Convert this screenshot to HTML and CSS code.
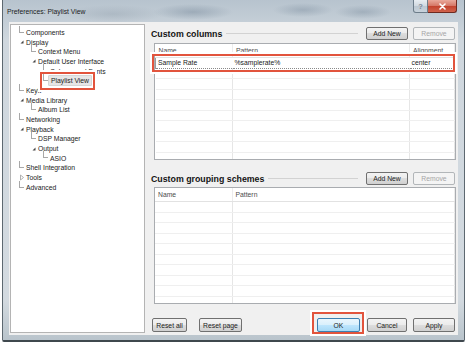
FILE: index.html
```html
<!DOCTYPE html>
<html lang="en">
<head>
  <meta charset="UTF-8">
  <title>Preferences: Playlist View</title>
  <link rel="stylesheet" href="styles.css">
</head>
<body>
  <div class="window">
    <div class="titlebar">
      <span class="title">Preferences: Playlist View</span>
      <div class="caption-btns">
        <span class="cap help">?</span>
        <span class="cap close">
          <svg width="9" height="7" viewBox="0 0 9 7"><path d="M2 1 L7 6 M7 1 L2 6" stroke="#fff" stroke-width="1.6" stroke-linecap="round"/></svg>
        </span>
      </div>
    </div>

    <div class="client">
      <!-- Page tree -->
      <div class="tree">
        <div class="node l0 leaf"><i class="g"></i>Components</div>
        <div class="node l0 open"><i class="g"><svg width="6" height="6" viewBox="0 0 6 6"><polygon points="4.5,1.5 4.5,4.5 1.5,4.5" fill="#444"/></svg></i>Display</div>
        <div class="node l1 leaf"><i class="g"></i>Context Menu</div>
        <div class="node l1 open"><i class="g"><svg width="6" height="6" viewBox="0 0 6 6"><polygon points="4.5,1.5 4.5,4.5 1.5,4.5" fill="#444"/></svg></i>Default User Interface</div>
        <div class="node l2 leaf"><i class="g"></i>Colours and Fonts</div>
        <div class="node l2 leaf"><i class="g"></i><span class="selected">Playlist View</span></div>
        <div class="node l0 leaf"><i class="g"></i>Keylt</div>
        <div class="node l0 open"><i class="g"><svg width="6" height="6" viewBox="0 0 6 6"><polygon points="4.5,1.5 4.5,4.5 1.5,4.5" fill="#444"/></svg></i>Media Library</div>
        <div class="node l1 leaf"><i class="g"></i>Album List</div>
        <div class="node l0 leaf"><i class="g"></i>Networking</div>
        <div class="node l0 open"><i class="g"><svg width="6" height="6" viewBox="0 0 6 6"><polygon points="4.5,1.5 4.5,4.5 1.5,4.5" fill="#444"/></svg></i>Playback</div>
        <div class="node l1 leaf"><i class="g"></i>DSP Manager</div>
        <div class="node l1 open"><i class="g"><svg width="6" height="6" viewBox="0 0 6 6"><polygon points="4.5,1.5 4.5,4.5 1.5,4.5" fill="#444"/></svg></i>Output</div>
        <div class="node l2 leaf"><i class="g"></i>ASIO</div>
        <div class="node l0 leaf"><i class="g"></i>Shell Integration</div>
        <div class="node l0 closed"><i class="g"><svg width="6" height="7" viewBox="0 0 6 7"><polygon points="1.5,1 4.5,3.5 1.5,6" fill="none" stroke="#a0a0a0" stroke-width="0.8"/></svg></i>Tools</div>
        <div class="node l0 leaf"><i class="g"></i>Advanced</div>
        <div class="callout tree-callout"></div>
      </div>

      <!-- Playlist View page -->
      <div class="page">
        <div class="group-head">
          <h2>Custom columns</h2>
          <span class="rule"></span>
          <button class="btn">Add New</button>
          <button class="btn last" disabled>Remove</button>
        </div>
        <div class="list list-columns">
          <div class="list-body">
            <table>
              <colgroup><col class="c-name"><col class="c-pattern"><col></colgroup>
              <thead>
                <tr><th>Name</th><th>Pattern</th><th>Alignment</th></tr>
              </thead>
              <tbody>
                <tr class="focus"><td>Sample Rate</td><td>%samplerate%</td><td>center</td></tr>
                <tr><td></td><td></td><td></td></tr>
                <tr><td></td><td></td><td></td></tr>
                <tr><td></td><td></td><td></td></tr>
                <tr><td></td><td></td><td></td></tr>
                <tr><td></td><td></td><td></td></tr>
                <tr><td></td><td></td><td></td></tr>
                <tr><td></td><td></td><td></td></tr>
                <tr><td></td><td></td><td></td></tr>
                <tr><td></td><td></td><td></td></tr>
              </tbody>
            </table>
          </div>
          <div class="callout row-callout"></div>
        </div>

        <div class="group-head second">
          <h2>Custom grouping schemes</h2>
          <span class="rule"></span>
          <button class="btn">Add New</button>
          <button class="btn last" disabled>Remove</button>
        </div>
        <div class="list list-groups">
          <div class="list-body">
            <table>
              <colgroup><col class="c-name"><col></colgroup>
              <thead>
                <tr><th>Name</th><th>Pattern</th></tr>
              </thead>
              <tbody>
                <tr><td></td><td></td></tr>
                <tr><td></td><td></td></tr>
                <tr><td></td><td></td></tr>
                <tr><td></td><td></td></tr>
                <tr><td></td><td></td></tr>
                <tr><td></td><td></td></tr>
                <tr><td></td><td></td></tr>
                <tr><td></td><td></td></tr>
                <tr><td></td><td></td></tr>
                <tr><td></td><td></td></tr>
              </tbody>
            </table>
          </div>
        </div>

        <div class="footer">
          <button class="btn reset-all">Reset all</button>
          <button class="btn reset-page">Reset page</button>
          <span class="spacer"></span>
          <span class="ok-wrap">
            <button class="btn default">OK</button>
            <span class="callout ok-callout"></span>
          </span>
          <button class="btn cancel">Cancel</button>
          <button class="btn apply">Apply</button>
        </div>
      </div>
    </div>
  </div>
</body>
</html>
```

FILE: styles.css
```css
body {
  margin: 0;
  background: #fff;
  font-family: "Liberation Sans", Arial, sans-serif;
  font-size: 6.8px;
  color: #222;
}

.window {
  margin-left: 2px;
  width: 463px;
  height: 342px;
  box-sizing: border-box;
  border: 1px solid #5d6870;
  border-top: none;
  border-bottom: 2px solid #3f484e;
  border-radius: 0 0 2px 2px;
  padding: 0 6px 5px;
  display: flex;
  flex-direction: column;
  background:
    radial-gradient(ellipse 40px 8px at 190px 12px, rgba(95, 115, 135, .35), transparent),
    radial-gradient(ellipse 30px 7px at 300px 10px, rgba(95, 115, 135, .3), transparent),
    radial-gradient(ellipse 28px 7px at 360px 12px, rgba(95, 115, 135, .3), transparent),
    radial-gradient(ellipse 50px 9px at 110px 14px, rgba(120, 135, 150, .25), transparent),
    linear-gradient(#b7c3ce, #cfd7de 40px, #d3dae0 300px, #b9c4cc);
}

.titlebar {
  height: 22px;
  display: flex;
  align-items: center;
}
.title {
  margin-left: -2px;
  color: #1c1c1c;
}
.caption-btns {
  margin-left: auto;
  margin-right: 1px;
  align-self: flex-start;
  display: flex;
}
.cap {
  height: 13px;
  box-sizing: border-box;
  display: flex;
  align-items: center;
  justify-content: center;
}
.help {
  width: 15px;
  border: 1px solid #6d7d8a;
  border-top: none;
  border-radius: 0 0 0 3px;
  background: linear-gradient(#e8edf2, #d0d8e0 50%, #bcc7d1 50%, #c9d3dc);
  color: #7a8794;
  font-weight: bold;
  font-size: 7.5px;
}
.close {
  width: 29px;
  border: 1px solid #6e2a20;
  border-top: none;
  border-left: none;
  border-radius: 0 0 3px 0;
  background: linear-gradient(#e9a99b, #d47564 50%, #c2412c 50%, #d0634c);
}

.client {
  flex: 1;
  background: #f0f0f0;
  display: flex;
  padding: 2px 2px 2px 1px;
}

/* tree */
.tree {
  width: 135px;
  box-sizing: border-box;
  border: 1px solid #b4b4b4;
  background: #fff;
  padding-top: 2.5px;
  position: relative;
}
.node {
  height: 9.7px;
  display: flex;
  align-items: center;
  white-space: nowrap;
}
.l0 { padding-left: 8px; }
.l1 { padding-left: 20px; }
.l2 { padding-left: 32px; }
.g {
  width: 6px;
  height: 100%;
  margin-right: 1px;
  flex: none;
  position: relative;
  display: flex;
  align-items: center;
}
.leaf .g::before {
  content: "";
  position: absolute;
  left: 0;
  top: -2px;
  width: 5px;
  height: 7px;
  box-sizing: border-box;
  border-left: 1px solid #a8a8a8;
  border-bottom: 1px solid #a8a8a8;
}
.selected {
  margin-left: -2px;
  padding: 1px 2px;
  background: #e6e6e6;
  border: 1px solid #d6d6d6;
  border-radius: 1px;
}

.callout {
  position: absolute;
  box-sizing: border-box;
  border: 2px solid #e2543d;
  box-shadow: 0 0 0 2px #fff;
}
.tree-callout {
  left: 29px;
  top: 47px;
  width: 55px;
  height: 18px;
}

/* page */
.page {
  flex: 1;
  margin-left: 6px;
  padding-top: 3px;
  display: flex;
  flex-direction: column;
}
.group-head {
  height: 13px;
  display: flex;
  align-items: center;
}
.group-head.second {
  margin-top: 12px;
}
.group-head h2 {
  margin: 0;
  font-size: 8.8px;
  color: #141414;
}
.rule {
  flex: 1;
  height: 1px;
  background: #d2d2d2;
  margin: 0 3px 0 4px;
}
.group-head .btn {
  width: 42px;
  height: 13px;
  margin-left: 5px;
}
.group-head .btn.last {
  margin-right: 1px;
}

.btn {
  font-family: inherit;
  font-size: 6.8px;
  color: #222;
  padding: 0;
  box-sizing: border-box;
  border: 1px solid #707070;
  border-radius: 2px;
  background: linear-gradient(#f3f3f3, #ebebeb 50%, #dddddd 50%, #d0d0d0);
}
.btn:disabled {
  border-color: #b2b6b9;
  background: #f4f4f4;
  color: #a6a6a6;
}
.btn.default {
  border-color: #3c7fb1;
  background: linear-gradient(#eaf6fd, #d9f0fc 50%, #bee6fd 50%, #a7d9f5);
}

.list {
  margin-left: 3px;
  height: 117px;
  box-sizing: border-box;
  border: 1px solid #a9acb0;
  background: #fff;
  position: relative;
}
.list-columns {
  margin-top: 3px;
}
.list-groups {
  margin-top: 2px;
}
.list-body {
  height: 100%;
  overflow: hidden;
}
table {
  width: 100%;
  table-layout: fixed;
  border-collapse: collapse;
}
.c-name { width: 77px; }
.list-columns .c-pattern { width: 177px; }
th {
  height: 13px;
  padding: 0 0 0 3px;
  text-align: left;
  font-weight: normal;
  color: #4d4d4d;
  border-bottom: 1px solid #e2e2e2;
  border-right: 1px solid #ececec;
}
td {
  height: 9.5px;
  padding: 0 0 0 2px;
  border-bottom: 1px solid #efefef;
  border-right: 1px solid #e6e6e6;
  white-space: nowrap;
  overflow: hidden;
}
tr.focus td {
  border-top: 1px dotted #8a8a8a;
  border-bottom: 1px dotted #8a8a8a;
  border-right: none;
}
tr.focus td:first-child {
  border-left: 1px solid #9a9a9a;
}
tr.focus td:last-child {
  border-right: 1px dotted #8a8a8a;
}
.row-callout {
  left: -3px;
  top: 10px;
  width: 303px;
  height: 18px;
}

/* footer buttons */
.footer {
  margin-top: 14px;
  height: 14px;
  display: flex;
}
.footer .btn {
  height: 14px;
}
.reset-all { width: 35px; margin-left: 1px; }
.reset-page { width: 43px; margin-left: 12px; }
.spacer { flex: 1; }
.ok-wrap {
  position: relative;
  display: flex;
}
.ok-wrap .btn { width: 43px; }
.ok-callout {
  left: -5px;
  right: -4px;
  top: -6px;
  bottom: -2px;
}
.cancel { width: 40px; margin-left: 7px; }
.apply { width: 42px; margin-left: 6px; margin-right: 1px; }
```
